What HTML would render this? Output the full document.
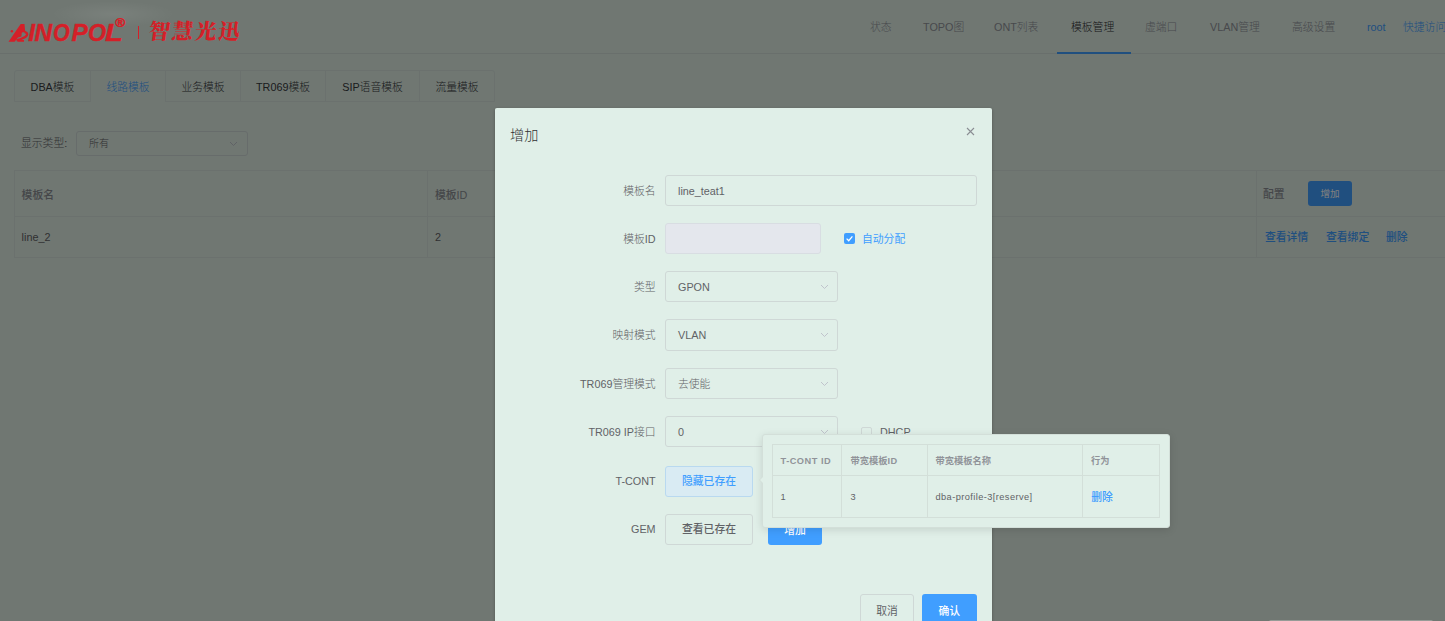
<!DOCTYPE html>
<html lang="zh-CN">
<head>
<meta charset="utf-8">
<title>模板管理</title>
<style>
*{box-sizing:border-box;margin:0;padding:0}
html,body{width:1445px;height:621px;overflow:hidden}
body{position:relative;background:#e0eee5;font-family:"Liberation Sans","Noto Sans CJK SC",sans-serif;font-size:10.8px;color:#606266;font-weight:300}
.abs{position:absolute;white-space:nowrap}
/* header */
#header{position:absolute;left:0;top:0;width:1445px;height:54px;border-bottom:1px solid #d3dfd9}
.nav{position:absolute;top:0;height:54px;line-height:54px;font-size:10.8px;color:#909399;white-space:nowrap}
.nav.act{color:#303133}
.nav.blue{color:#409eff}
#navline{position:absolute;left:1057px;top:52px;width:74px;height:2px;background:#409eff}
/* logo */
#logo{position:absolute;left:0;top:0;width:260px;height:54px;white-space:nowrap;color:#d41f28;z-index:5}
#logo .en{position:absolute;top:18px;font:italic bold 24.4px/30px "Liberation Sans",sans-serif;-webkit-text-stroke:0.4px #d41f28}
#logo .reg{position:absolute;left:115.3px;top:16px;font:bold 13.5px/14px "Liberation Sans",sans-serif;-webkit-text-stroke:0.5px #d41f28}
#logo .bar{position:absolute;left:138px;top:26px;width:1px;height:13px;background:#d41f28}
#logo .cn{position:absolute;left:147px;top:13.5px;font:normal 900 21.5px/32px "Noto Serif CJK SC","Noto Sans CJK SC",serif;letter-spacing:1.7px;transform:skewX(-7deg);transform-origin:0 100%}
/* tabs */
#tabs{position:absolute;left:14px;top:70px;height:32px;display:flex;border:1px solid #d6e3dd;border-radius:3px 3px 0 0}
#tabs div{height:30px;line-height:33px;font-size:10.8px;color:#36393c;text-align:center;border-left:1px solid #d6e3dd}
#tabs div:first-child{border-left:none}
#tabs div.on{color:#409eff;height:31px;background:#e0eee5}
/* filter */
.sel{position:absolute;border:1px solid #cfd8d6;border-radius:3px;background:#e0eee5;color:#606266}
.sel .v{position:absolute;left:12px;top:0}
.chev{position:absolute;width:9px;height:6px}
/* table */
#tbl{position:absolute;left:14px;top:170px;width:1440px;height:88px;border:1px solid #d6e3dd;border-right:none}
#tbl .hl{position:absolute;left:0;width:1440px;height:1px;background:#d6e3dd}
#tbl .vl{position:absolute;top:0;width:1px;height:86px;background:#d6e3dd}
.th{color:#8a8d93;font-weight:500}
.link{color:#409eff;font-weight:500}
.btnp{position:absolute;background:#409eff;color:#fff;border-radius:3px;text-align:center;font-weight:500}
.btnd{position:absolute;background:#e0efe8;color:#606266;border:1px solid #cfd8d6;border-radius:3px;text-align:center;font-weight:500}
/* overlay */
#mask{position:absolute;left:0;top:0;width:1445px;height:621px;background:rgba(0,0,0,.5)}
/* dialog */
#dlg{position:absolute;left:495px;top:108px;width:496.6px;border-left:1px solid #e0efe8;height:560px;background:#e0efe8;border-radius:2px;box-shadow:0 1px 3px rgba(0,0,0,.3)}
#dlg .lbl{position:absolute;right:336px;text-align:right;white-space:nowrap;color:#606266;font-size:10.8px;height:31px;line-height:33px}
#dlg .inp{position:absolute;left:169px;height:31.2px;border:1px solid #cfd8d6;border-radius:3px;line-height:30.4px;font-size:10.8px;color:#606266;padding-left:12px;white-space:nowrap}
#dlg .inp.dis{background:#e4e7ed;border-color:#d8dde2}
.cb{position:absolute;width:11px;height:11px;border-radius:2px}
/* popover */
#pop{position:absolute;left:762px;top:434px;width:408.4px;height:93.5px;background:#e0efe8;border:1px solid #d3dfd9;border-radius:3px;box-shadow:0 2px 9px rgba(0,0,0,.12)}
#pop .t{position:absolute;left:9px;top:9px;width:387.6px;height:74px;border:1px solid #d3dfd9}
#pop .t .hl{position:absolute;left:0;top:30px;width:385.6px;height:1px;background:#d3dfd9}
#pop .t .vl{position:absolute;top:0;width:1px;height:72px;background:#d3dfd9}
#pop .t .h{position:absolute;top:0;height:31px;line-height:32px;font-size:9.24px;font-weight:bold;color:#909399;white-space:nowrap}
#pop .t .c{position:absolute;top:32px;height:40px;line-height:40px;font-size:9.24px;color:#606266;white-space:nowrap}
#arrow{position:absolute;left:758.5px;top:476px;width:0;height:0;border:4.5px solid transparent;border-left:none;border-right-color:#d3dfd9;z-index:3}
#arrow:after{content:"";position:absolute;left:1px;top:-4.5px;border:4.5px solid transparent;border-left:none;border-right-color:#e0efe8}
</style>
</head>
<body>
<div id="header">
  <div id="logo">
    <div class="abs" style="left:40px;top:0;width:150px;height:30px;background:radial-gradient(ellipse 62px 13px at 73px 14px,rgba(255,255,255,.07),rgba(255,255,255,0))"></div>
    <svg class="abs" style="left:0;top:0" width="40" height="54" viewBox="0 0 40 54"><path d="M8.5 41.7 L20.7 24.1 L24.5 24.1 L25.2 32 L21.8 32.6 L21.4 36.4 L18 37.6 L14.6 41.7 Z" fill="#d41f28"/><path d="M24.6 31.8 C29.4 33.4 28.2 37 16.6 40.4" fill="none" stroke="#d41f28" stroke-width="2.4"/><path d="M18.5 40 H24 V41.7 H17.5 Z" fill="#d41f28"/><circle cx="11.9" cy="31.3" r="1.2" fill="#d41f28"/></svg>
    <span class="en" style="left:28.2px">I</span><span class="en" style="left:34.6px">N</span><span class="en" style="left:53px;transform:scaleX(.88);transform-origin:0 0">O</span><span class="en" style="left:71.4px">P</span><span class="en" style="left:87.8px;transform:scaleX(.95);transform-origin:0 0">O</span><span class="en" style="left:105.2px;transform:scaleX(1.2);transform-origin:0 0">L</span><span class="reg">®</span>
    <span class="bar"></span>
    <span class="cn">智慧光迅</span>
  </div>
  <div class="nav" style="left:870px">状态</div>
  <div class="nav" style="left:923px">TOPO图</div>
  <div class="nav" style="left:994px">ONT列表</div>
  <div class="nav act" style="left:1071px">模板管理</div>
  <div class="nav" style="left:1145px">虚端口</div>
  <div class="nav" style="left:1210px">VLAN管理</div>
  <div class="nav" style="left:1292px">高级设置</div>
  <div class="nav blue" style="left:1367px">root</div>
  <div class="nav blue" style="left:1403px">快捷访问</div>
  <div id="navline"></div>
</div>

<div id="tabs">
  <div style="width:75px">DBA模板</div>
  <div class="on" style="width:75px">线路模板</div>
  <div style="width:75px">业务模板</div>
  <div style="width:85px">TR069模板</div>
  <div style="width:94px">SIP语音模板</div>
  <div style="width:75px">流量模板</div>
</div>

<div class="abs" style="left:21px;top:131px;height:25px;line-height:25px;font-size:10.8px;color:#606266">显示类型:</div>
<div class="sel" style="left:76px;top:131px;width:171.6px;height:25px;line-height:23px;font-size:10px"><span class="v">所有</span>
  <svg class="chev" style="left:152px;top:9px" viewBox="0 0 9 6"><path d="M1 1 L4.5 4.5 L8 1" fill="none" stroke="#c0c4cc" stroke-width="1"/></svg>
</div>

<div id="tbl">
  <div class="hl" style="top:45px"></div>
  <div class="vl" style="left:412px"></div>
  <div class="vl" style="left:1241px"></div>
  <div class="abs th" style="left:6.6px;top:0;line-height:49px">模板名</div>
  <div class="abs th" style="left:420px;top:0;line-height:49px">模板ID</div>
  <div class="abs th" style="left:1248px;top:0;line-height:47px">配置</div>
  <div class="btnp" style="left:1293px;top:10px;width:44px;height:25px;line-height:25px;font-size:9.6px;font-weight:400">增加</div>
  <div class="abs" style="left:6.6px;top:46px;line-height:40px">line_2</div>
  <div class="abs" style="left:420px;top:46px;line-height:40px">2</div>
  <div class="abs link" style="left:1250px;top:46px;line-height:41px">查看详情</div>
  <div class="abs link" style="left:1311px;top:46px;line-height:41px">查看绑定</div>
  <div class="abs link" style="left:1371px;top:46px;line-height:41px">删除</div>
</div>

<div id="mask"></div>

<div id="dlg">
  <div class="abs" style="left:14px;top:14px;font-size:14.2px;line-height:26px;color:#303133">增加</div>
  <svg class="abs" style="left:470px;top:19px" width="9" height="9" viewBox="0 0 9 9"><path d="M1 1 L8 8 M8 1 L1 8" stroke="#8a8d93" stroke-width="1.1" fill="none"/></svg>

  <div class="lbl" style="top:66.5px">模板名</div>
  <div class="inp" style="top:66.5px;width:312px">line_teat1</div>

  <div class="lbl" style="top:114.9px">模板ID</div>
  <div class="inp dis" style="top:114.9px;width:156px"></div>
  <div class="cb" style="left:348px;top:125px;background:#409eff">
    <svg width="11" height="11" viewBox="0 0 11 11" style="display:block"><path d="M2.6 5.6 L4.7 7.7 L8.4 3.4" stroke="#fff" stroke-width="1.3" fill="none"/></svg>
  </div>
  <div class="abs" style="left:366px;top:115px;line-height:33px;color:#409eff;font-weight:400">自动分配</div>

  <div class="lbl" style="top:163.2px">类型</div>
  <div class="inp" style="top:163.2px;width:173px">GPON<svg class="chev" style="left:154px;top:12px" viewBox="0 0 9 6"><path d="M1 1 L4.5 4.5 L8 1" fill="none" stroke="#c0c4cc" stroke-width="1"/></svg></div>

  <div class="lbl" style="top:211.4px">映射模式</div>
  <div class="inp" style="top:211.4px;width:173px">VLAN<svg class="chev" style="left:154px;top:12px" viewBox="0 0 9 6"><path d="M1 1 L4.5 4.5 L8 1" fill="none" stroke="#c0c4cc" stroke-width="1"/></svg></div>

  <div class="lbl" style="top:260.1px">TR069管理模式</div>
  <div class="inp" style="top:260.1px;width:173px">去使能<svg class="chev" style="left:154px;top:12px" viewBox="0 0 9 6"><path d="M1 1 L4.5 4.5 L8 1" fill="none" stroke="#c0c4cc" stroke-width="1"/></svg></div>

  <div class="lbl" style="top:308.2px">TR069 IP接口</div>
  <div class="inp" style="top:308.2px;width:173px">0<svg class="chev" style="left:154px;top:12px" viewBox="0 0 9 6"><path d="M1 1 L4.5 4.5 L8 1" fill="none" stroke="#c0c4cc" stroke-width="1"/></svg></div>
  <div class="cb" style="left:365px;top:319px;border:1px solid #cfd8d6"></div>
  <div class="abs" style="left:384px;top:308px;line-height:33px;color:#606266;font-weight:500">DHCP</div>

  <div class="lbl" style="top:356.5px">T-CONT</div>
  <div class="btnd" style="left:169px;top:358px;width:88px;height:31px;line-height:29px;color:#409eff;background:#d9ebf3;border-color:#b9d9f0">隐藏已存在</div>

  <div class="lbl" style="top:405px">GEM</div>
  <div class="btnd" style="left:169px;top:406px;width:88px;height:31px;line-height:29px">查看已存在</div>
  <div class="btnp" style="left:272px;top:406px;width:54px;height:31px;line-height:32px">增加</div>

  <div class="btnd" style="left:364px;top:486px;width:54px;height:31px;line-height:33px;font-weight:400">取消</div>
  <div class="btnp" style="left:426px;top:486px;width:54.5px;height:31px;line-height:35px">确认</div>
</div>

<div id="arrow"></div>
<div id="pop">
  <div class="t">
    <div class="hl"></div>
    <div class="vl" style="left:68px"></div>
    <div class="vl" style="left:154px"></div>
    <div class="vl" style="left:309px"></div>
    <div class="h" style="left:7.5px;letter-spacing:.5px">T-CONT ID</div>
    <div class="h" style="left:77.5px">带宽模板<span style="letter-spacing:.5px">ID</span></div>
    <div class="h" style="left:162.5px">带宽模板名称</div>
    <div class="h" style="left:318px">行为</div>
    <div class="c" style="left:7.5px">1</div>
    <div class="c" style="left:77.5px">3</div>
    <div class="c" style="left:162.5px;letter-spacing:.42px">dba-profile-3[reserve]</div>
    <div class="c" style="left:318.2px;color:#409eff;font-size:10.8px;font-weight:500">删除</div>
  </div>
</div>
<div class="abs" style="left:1269px;top:619.7px;width:164px;height:4px;background:#969b97;border-radius:2px"></div>
</body>
</html>
